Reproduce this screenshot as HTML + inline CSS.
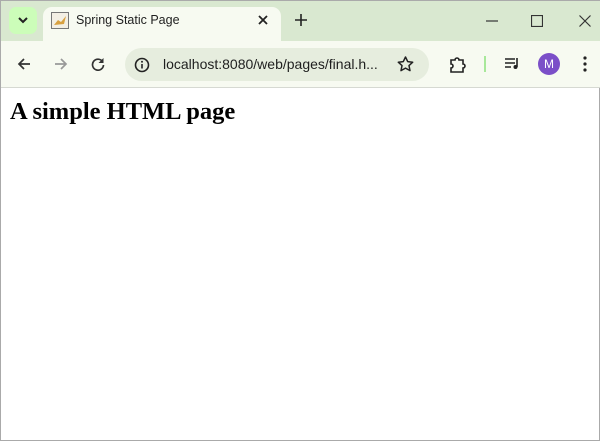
<!DOCTYPE html>
<html><head><style>
*{margin:0;padding:0;box-sizing:border-box}
body{width:600px;height:441px;overflow:hidden;background:#fff;font-family:"Liberation Sans",sans-serif;position:relative;border:1px solid #aaa;border-top:none}
.strip{position:absolute;left:0;top:0;width:600px;height:41px;background:#d9e8d0;border-top:1px solid #aaa}
.dd{position:absolute;left:8px;top:7px;width:28px;height:27px;background:#ccfdb9;border-radius:7px}
.tab{position:absolute;left:42px;top:7px;width:238px;height:35px;background:#f7faf1;border-radius:9px 9px 0 0}
.tb{position:absolute;left:0;top:41px;width:600px;height:47px;background:#f7faf1;border-bottom:1px solid #d6d9d2}
.addr{position:absolute;left:124px;top:48px;width:304px;height:33px;background:#e6edde;border-radius:17px}
.t{position:absolute;font-size:13px;color:#1f1f1f}
h1{position:absolute;left:9px;top:98px;font-family:"Liberation Serif",serif;font-size:24.5px;font-weight:bold;color:#000}
svg{position:absolute}
</style></head><body>
<div class="strip"></div>
<div class="dd"></div>
<svg style="left:16px;top:15px" width="12" height="10"><path d="M2 3l4 4 4-4" stroke="#222" stroke-width="2" fill="none"/></svg>
<div class="tab"></div>
<svg style="left:50px;top:12px" width="18" height="17"><rect x="0.5" y="0.5" width="17" height="16" fill="#f3efe4" stroke="#777"/><path d="M3 13l4-5 3 2 5-6-2 8z" fill="#d8a040"/></svg>
<div class="t" style="left:75px;top:13px;font-size:12.5px">Spring Static Page</div>
<svg style="left:257px;top:15px" width="10" height="10"><path d="M1 1l8 8M9 1l-8 8" stroke="#222" stroke-width="1.8"/></svg>
<svg style="left:294px;top:14px" width="12" height="12"><path d="M6 0v12M0 6h12" stroke="#222" stroke-width="1.6"/></svg>
<svg style="left:485px;top:20px" width="12" height="2"><path d="M0 1h12" stroke="#333" stroke-width="1.2"/></svg>
<svg style="left:530px;top:15px" width="12" height="12"><rect x="0.5" y="0.5" width="11" height="11" fill="none" stroke="#333" stroke-width="1.2"/></svg>
<svg style="left:578px;top:15px" width="12" height="12"><path d="M0.5 0.5l11 11M11.5 0.5l-11 11" stroke="#333" stroke-width="1.2"/></svg>
<div class="tb"></div>
<svg style="left:16px;top:57px" width="14" height="14"><path d="M13 7H2M7 2L2 7l5 5" stroke="#333" stroke-width="1.7" fill="none"/></svg>
<svg style="left:53px;top:57px" width="14" height="14"><path d="M1 7h11M7 2l5 5-5 5" stroke="#999" stroke-width="1.7" fill="none"/></svg>
<svg style="left:90px;top:57px" width="14" height="14"><path d="M11.5 4.5A5.5 5.5 0 1 0 12.5 8" stroke="#333" stroke-width="1.7" fill="none"/><path d="M12.5 1v5h-5" fill="#333"/></svg>
<div class="addr"></div>
<svg style="left:133px;top:57px" width="16" height="16"><circle cx="8" cy="8" r="6.5" stroke="#222" stroke-width="1.6" fill="none"/><path d="M8 7v4.5" stroke="#222" stroke-width="1.6"/><circle cx="8" cy="4.8" r="1" fill="#222"/></svg>
<div class="t" style="left:162px;top:56px;font-size:14px">localhost:8080/web/pages/final.h...</div>
<svg style="left:396px;top:56px" width="17" height="16"><path d="M8.5 1l2.2 4.6 5 .6-3.7 3.4 1 5-4.5-2.5-4.5 2.5 1-5L1.3 6.2l5-.6z" stroke="#222" stroke-width="1.5" fill="none" stroke-linejoin="round"/></svg>
<svg style="left:448px;top:56px" width="18" height="17"><path d="M2 4h4a2 2 0 0 1 4 0h4v4a2 2 0 0 1 0 4v4H2v-4a2 2 0 0 0 0-4z" stroke="#222" stroke-width="1.6" fill="none"/></svg>
<div style="position:absolute;left:483px;top:56px;width:2px;height:16px;background:#a8e89a"></div>
<svg style="left:503px;top:57px" width="16" height="13"><path d="M1 2h10M1 6h10M1 10h6" stroke="#222" stroke-width="1.6"/><path d="M13 1v9" stroke="#222" stroke-width="1.6"/><circle cx="11.5" cy="10" r="2" fill="#222"/></svg>
<div style="position:absolute;left:537px;top:53px;width:22px;height:22px;border-radius:50%;background:#7b4fc8;color:#fff;font-size:12px;text-align:center;line-height:22px">M</div>
<svg style="left:582px;top:56px" width="4" height="16"><circle cx="2" cy="2" r="1.6" fill="#222"/><circle cx="2" cy="8" r="1.6" fill="#222"/><circle cx="2" cy="14" r="1.6" fill="#222"/></svg>
<h1>A simple HTML page</h1>
</body></html>
